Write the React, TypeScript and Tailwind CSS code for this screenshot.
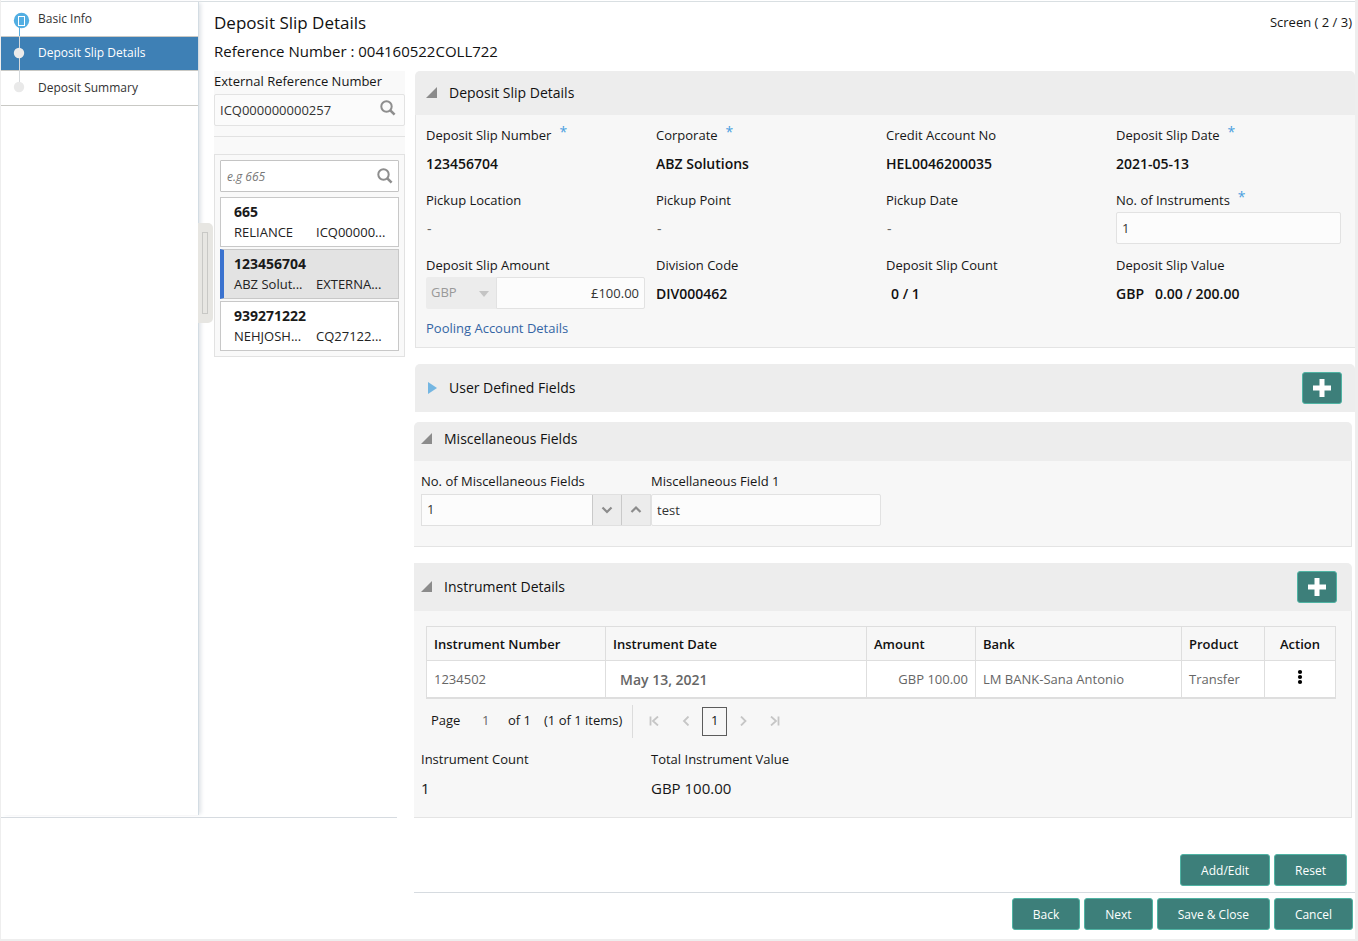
import type { ReactNode } from "react";

const slips = [
  { id: "665", name: "RELIANCE", ref: "ICQ00000..." },
  { id: "123456704", name: "ABZ Solut...", ref: "EXTERNA..." },
  { id: "939271222", name: "NEHJOSH...", ref: "CQ27122..." },
];

const buttonClass =
  "h-8 rounded-[3px] border border-[#4fb3a3] bg-[#3d7f7a] pt-[2px] text-[12px] text-white";

function SearchIcon() {
  return (
    <svg width="16" height="16" viewBox="0 0 16 16" fill="none" aria-hidden="true">
      <circle cx="6.5" cy="6.5" r="5.2" stroke="#8e8e8e" strokeWidth="2" />
      <path d="M10.3 10.3L14.6 14.6" stroke="#8e8e8e" strokeWidth="2.6" />
    </svg>
  );
}

function Chevron({ d }: { d: string }) {
  return (
    <svg width="12" height="12" viewBox="0 0 12 12" fill="none" aria-hidden="true">
      <path d={d} stroke="#8c8c8c" strokeWidth="2.2" />
    </svg>
  );
}

function PageIcon({ d }: { d: string }) {
  return (
    <svg width="10" height="10" viewBox="0 0 10 10" fill="none" aria-hidden="true">
      <path d={d} stroke="#c6c6c6" strokeWidth="1.8" />
    </svg>
  );
}

function AddButton({ label }: { label: string }) {
  return (
    <button
      aria-label={label}
      className="ml-auto flex h-8 w-10 items-center justify-center rounded-[3px] border border-[#4fb3a3] bg-[#3d7f7a]"
    >
      <svg width="18" height="18" viewBox="0 0 18 18" aria-hidden="true">
        <path d="M6.5 0h5v6.5H18v5h-6.5V18h-5v-6.5H0v-5h6.5z" fill="#fff" />
      </svg>
    </button>
  );
}

function PanelTitle({ title, open = true }: { title: string; open?: boolean }) {
  return (
    <button className="flex items-center gap-[11px] text-[14px] leading-5 text-[#111]">
      <svg width="12" height="12" viewBox="0 0 12 12" aria-hidden="true">
        {open ? (
          <path d="M11 0v11H0z" fill="#8b8b8b" />
        ) : (
          <path d="M2 0l9 6-9 6z" fill="#74b6e2" />
        )}
      </svg>
      {title}
    </button>
  );
}

function Label({
  text,
  required,
  htmlFor,
}: {
  text: string;
  required?: boolean;
  htmlFor?: string;
}) {
  const star = required && (
    <span className="mb-2 ml-2 text-[14px] leading-3 text-[#4a9fe0]">*</span>
  );
  const style = "flex h-[22px] items-center text-[13px] text-[#161616]";
  return htmlFor ? (
    <label htmlFor={htmlFor} className={style}>
      {text}
      {star}
    </label>
  ) : (
    <div className={style}>
      {text}
      {star}
    </div>
  );
}

function Field({
  label,
  required,
  children,
}: {
  label: string;
  required?: boolean;
  children: ReactNode;
}) {
  return (
    <div>
      <Label text={label} required={required} />
      <div className="flex h-8 items-center text-[14px] font-semibold text-[#111]">{children}</div>
    </div>
  );
}

function Sidebar() {
  return (
    <aside className="relative w-[198px] shrink-0">
      <nav className="h-[813px] border-r border-[#d3dce3] shadow-[3px_0_4px_-1px_#dfe3e7]">
        <div className="grid h-[104px] grid-rows-3 text-[12px] text-[#333]">
          <a href="#basic" className="flex items-center border-b border-[#c9c9c5] pl-[37px]">
            Basic Info
          </a>
          <a
            href="#details"
            className="flex items-center border-b border-[#c9c9c5] bg-[#3e80b5] pl-[37px] text-white"
          >
            Deposit Slip Details
          </a>
          <a href="#summary" className="flex items-center border-b border-[#c9c9c5] pl-[37px]">
            Deposit Summary
          </a>
        </div>
      </nav>
      <hr className="mt-[2px] w-[396px] border-[#d6dbe0]" />
      <svg
        width="36"
        height="104"
        viewBox="0 0 36 104"
        fill="none"
        className="pointer-events-none absolute top-0 left-0"
        aria-hidden="true"
      >
        <path d="M18.5 20V34" stroke="#5aaee0" />
        <path d="M18.5 34V85" stroke="#d5d9dc" />
        <circle cx="20.5" cy="18.5" r="7.7" fill="#52aee2" />
        <rect x="17.5" y="14.5" width="6" height="9" stroke="#fff" />
        <circle cx="18" cy="51" r="5.2" fill="#ecebea" />
        <circle cx="18" cy="85" r="5.2" fill="#e9e9e9" />
      </svg>
      <div className="absolute top-[221px] left-[197px] flex h-[100px] w-[15px] items-center rounded-r-[5px] bg-[#e7e6e2] pl-1">
        <span className="h-[82px] w-[6px] border border-[#c8c8c5]" />
      </div>
    </aside>
  );
}

function SlipList() {
  return (
    <div className="w-[191px] shrink-0">
      <div className="bg-[#f9f9f9] pb-[17px]">
        <Label text="External Reference Number" htmlFor="ext-ref" />
        <div className="mt-px flex h-8 items-center rounded-[2px] border border-[#e3e3e3] bg-[#fbfbfb] pr-2">
          <input
            id="ext-ref"
            defaultValue="ICQ000000000257"
            className="h-full w-full min-w-0 pl-[5px] text-[13px] text-[#333]"
          />
          <button aria-label="Search reference" className="mb-1">
            <SearchIcon />
          </button>
        </div>
        <hr className="mt-[10px] border-[#e2e2e2]" />
      </div>
      <div className="border border-[#e2e2e2] bg-[#f9f9f9] p-[5px]">
        <div className="flex h-8 items-center rounded-[1px] border border-[#c4c4c4] bg-white pr-[5px]">
          <input
            aria-label="Search deposit slips"
            placeholder="e.g 665"
            className="h-full w-full min-w-0 pl-[6px] text-[12px] italic placeholder:text-[#777]"
          />
          <button aria-label="Search">
            <SearchIcon />
          </button>
        </div>
        <ul className="mt-[5px] grid gap-[2px]">
          {slips.map((slip) => (
            <li
              key={slip.id}
              className={
                slip.id === "123456704"
                  ? "h-[50px] border border-l-4 border-[#c8c8c8] border-l-[#3a72cf] bg-[#e3e3e3] pt-1 pl-[10px]"
                  : "h-[50px] border border-[#c8c8c8] bg-white pt-1 pl-[13px]"
              }
            >
              <div className="text-[14px] leading-5 font-bold text-[#1a1a1a]">{slip.id}</div>
              <div className="flex text-[13px] leading-5 text-[#222]">
                <span className="w-[82px] whitespace-nowrap">{slip.name}</span>
                <span className="whitespace-nowrap">{slip.ref}</span>
              </div>
            </li>
          ))}
        </ul>
      </div>
    </div>
  );
}

function DepositSlipPanel() {
  return (
    <section>
      <header className="flex h-11 items-center rounded-t-[5px] bg-[#ededed] pl-[11px]">
        <PanelTitle title="Deposit Slip Details" />
      </header>
      <div className="border-b border-l border-[#e4e4e4] bg-[#f7f7f7] pt-[10px] pr-[9px] pb-[9px] pl-[10px]">
        <div className="grid grid-cols-4 gap-y-[11px]">
          <Field label="Deposit Slip Number" required>
            123456704
          </Field>
          <Field label="Corporate" required>
            ABZ Solutions
          </Field>
          <Field label="Credit Account No">HEL0046200035</Field>
          <Field label="Deposit Slip Date" required>
            2021-05-13
          </Field>
          <Field label="Pickup Location">
            <span className="pl-px font-normal text-[#666]">-</span>
          </Field>
          <Field label="Pickup Point">
            <span className="pl-px font-normal text-[#666]">-</span>
          </Field>
          <Field label="Pickup Date">
            <span className="pl-px font-normal text-[#666]">-</span>
          </Field>
          <div className="pr-[5px]">
            <Label text="No. of Instruments" required htmlFor="instruments" />
            <input
              id="instruments"
              defaultValue="1"
              className="h-8 w-full rounded-[2px] border border-[#e2e2e2] bg-[#fcfcfc] pl-[5px] text-[13px] text-[#333]"
            />
          </div>
          <div className="pr-[11px]">
            <Label text="Deposit Slip Amount" htmlFor="amount" />
            <div className="flex h-8">
              <div className="relative w-[70px] shrink-0">
                <select
                  aria-label="Currency"
                  disabled
                  className="h-full w-full appearance-none rounded-l-[2px] bg-[#ececec] pl-[5px] text-[13px] text-[#999] opacity-100"
                >
                  <option>GBP</option>
                </select>
                <svg
                  width="10"
                  height="6"
                  viewBox="0 0 10 6"
                  className="pointer-events-none absolute top-[14px] right-[7px]"
                  aria-hidden="true"
                >
                  <path d="M0 0h10L5 6z" fill="#c4c4c4" />
                </svg>
              </div>
              <input
                id="amount"
                defaultValue="£100.00"
                className="h-full w-full min-w-0 rounded-r-[2px] border border-[#e2e2e2] bg-[#fcfcfc] pr-[5px] text-right text-[13px] text-[#333]"
              />
            </div>
          </div>
          <Field label="Division Code">DIV000462</Field>
          <Field label="Deposit Slip Count">
            <span className="pl-[5px]">0 / 1</span>
          </Field>
          <Field label="Deposit Slip Value">
            <span className="mr-[11px]">GBP</span>
            <span>0.00 / 200.00</span>
          </Field>
        </div>
        <a href="#pooling" className="mt-[9px] block w-fit text-[13px] leading-5 text-[#3465a4]">
          Pooling Account Details
        </a>
      </div>
    </section>
  );
}

function MiscPanel() {
  return (
    <section className="mt-[10px] mr-[3px] -ml-px">
      <header className="flex h-[39px] items-center rounded-t-[5px] bg-[#ededed] pb-[6px] pl-[7px]">
        <PanelTitle title="Miscellaneous Fields" />
      </header>
      <div className="flex border-r border-b border-[#e4e4e4] bg-[#f7f7f7] pt-[10px] pb-5 pl-[7px]">
        <div className="w-[230px]">
          <Label text="No. of Miscellaneous Fields" htmlFor="misc-count" />
          <div className="mt-px flex h-8 border border-[#e0e0e0]">
            <input
              id="misc-count"
              defaultValue="1"
              className="w-full min-w-0 bg-[#fcfcfc] pl-[5px] text-[13px] text-[#333]"
            />
            <button
              aria-label="Decrease"
              className="flex w-[29px] shrink-0 items-center justify-center border-l border-[#c9c9c9] bg-[#ececec]"
            >
              <Chevron d="M1.5 3.5L6 8l4.500-4.500" />
            </button>
            <button
              aria-label="Increase"
              className="flex w-[29px] shrink-0 items-center justify-center border-l border-[#c9c9c9] bg-[#ececec]"
            >
              <Chevron d="M1.5 8L6 3.500 10.500 8" />
            </button>
          </div>
        </div>
        <div className="w-[230px]">
          <Label text="Miscellaneous Field 1" htmlFor="misc-1" />
          <input
            id="misc-1"
            defaultValue="test"
            className="mt-px h-8 w-full rounded-[2px] border border-[#e2e2e2] bg-[#fcfcfc] pl-[5px] text-[13px] text-[#333]"
          />
        </div>
      </div>
    </section>
  );
}

function InstrumentPanel() {
  const cell = "border border-[#dedede] px-[7px] pt-[2px]";
  return (
    <section className="mt-4 mr-[3px] -ml-px">
      <header className="flex h-12 items-center rounded-tr-[5px] bg-[#ededed] pr-[15px] pl-[7px]">
        <PanelTitle title="Instrument Details" />
        <AddButton label="Add instrument" />
      </header>
      <div className="border-r border-b border-[#e4e4e4] bg-[#f7f7f7] pt-[15px] pb-[19px] pl-[7px]">
        <div className="mr-[15px] ml-[5px]">
          <table className="w-full table-fixed border-collapse border-b-2 border-[#dedede] text-left text-[13px]">
            <thead>
              <tr className="h-[34px] text-[#111]">
                <th className={cell + " w-[179px] font-semibold"}>Instrument Number</th>
                <th className={cell + " w-[261px] font-semibold"}>Instrument Date</th>
                <th className={cell + " w-[109px] font-semibold"}>Amount</th>
                <th className={cell + " font-semibold"}>Bank</th>
                <th className={cell + " w-[83px] font-semibold"}>Product</th>
                <th className={cell + " w-[71px] text-center font-semibold"}>Action</th>
              </tr>
            </thead>
            <tbody>
              <tr className="h-[37px] bg-white text-[#666]">
                <td className={cell}>1234502</td>
                <td className={cell + " text-[14px] font-semibold"}>
                  <span className="pl-[7px]">May 13, 2021</span>
                </td>
                <td className={cell + " text-right"}>GBP 100.00</td>
                <td className={cell}>LM BANK-Sana Antonio</td>
                <td className={cell}>Transfer</td>
                <td className={cell}>
                  <button aria-label="Row actions" className="mx-auto mb-[6px] block text-black">
                    <svg width="6" height="16" viewBox="0 0 6 16" aria-hidden="true">
                      <circle cx="3" cy="3" r="2.100" />
                      <circle cx="3" cy="8" r="2.100" />
                      <circle cx="3" cy="13" r="2.100" />
                    </svg>
                  </button>
                </td>
              </tr>
            </tbody>
          </table>
        </div>
        <div className="mt-[6px] ml-[10px] flex h-[33px] items-center text-[13px] text-[#161616]">
          <label htmlFor="page" className="w-[51px]">
            Page
          </label>
          <input id="page" defaultValue="1" className="w-[26px] text-[#666]" />
          <span className="w-9">of 1</span>
          <span>(1 of 1 items)</span>
          <span className="ml-[10px] h-full border-l border-[#dcdcdc]" />
          <div className="ml-4 flex items-center">
            <button aria-label="First page" disabled>
              <PageIcon d="M1.500 0.500v9M9 0.500L4 5l5 4.500" />
            </button>
            <button aria-label="Previous page" disabled className="ml-[22px]">
              <PageIcon d="M7.500 0.500L3 5l4.500 4.500" />
            </button>
            <button className="mx-[11px] h-[29px] w-[25px] border border-[#5c5c5c]">1</button>
            <button aria-label="Next page" disabled>
              <PageIcon d="M3 0.500L7.500 5 3 9.500" />
            </button>
            <button aria-label="Last page" disabled className="ml-[22px]">
              <PageIcon d="M8.500 0.500v9M1 0.500L6 5l-5 4.500" />
            </button>
          </div>
        </div>
        <div className="mt-[11px] flex text-[#161616]">
          <div className="w-[230px]">
            <Label text="Instrument Count" />
            <div className="mt-[7px] text-[15px] leading-5">1</div>
          </div>
          <div className="w-[230px]">
            <Label text="Total Instrument Value" />
            <div className="mt-[7px] text-[15px] leading-5">GBP 100.00</div>
          </div>
        </div>
      </div>
    </section>
  );
}

export default function App() {
  return (
    <div className="min-h-screen border-r-[3px] border-b-2 border-l border-[#eeeeee] bg-white pt-px font-['Open_Sans','Noto_Sans',sans-serif]">
      <div className="flex border-t border-[#d9dfe2]">
        <Sidebar />
        <main className="min-w-0 flex-1 pl-[15px]">
          <div className="mt-[9px] flex items-center justify-between pr-[3px]">
            <h1 className="text-[17px] leading-6 text-[#111]">Deposit Slip Details</h1>
            <span className="text-[13px] text-[#161616]">Screen ( 2 / 3)</span>
          </div>
          <p className="mt-[6px] text-[15px] leading-5 text-[#111]">
            Reference Number : 004160522COLL722
          </p>
          <div className="mt-[10px] flex gap-[10px]">
            <SlipList />
            <div className="min-w-0 flex-1">
              <DepositSlipPanel />
              <section className="mt-4 flex h-12 items-center rounded-t-[5px] bg-[#ededed] pr-[13px] pl-[11px]">
                <PanelTitle title="User Defined Fields" open={false} />
                <AddButton label="Add user defined field" />
              </section>
              <MiscPanel />
              <InstrumentPanel />
              <div className="mt-9 mr-2 flex justify-end gap-1">
                <button className={buttonClass + " px-5"}>Add/Edit</button>
                <button className={buttonClass + " px-5"}>Reset</button>
              </div>
              <hr className="mt-[6px] -ml-px border-[#d6dbe0]" />
              <div className="mt-[5px] mr-[2px] flex justify-end gap-1 pb-2">
                <button className={buttonClass + " px-5"}>Back</button>
                <button className={buttonClass + " px-5"}>Next</button>
                <button className={buttonClass + " px-5"}>Save &amp; Close</button>
                <button className={buttonClass + " px-5"}>Cancel</button>
              </div>
            </div>
          </div>
        </main>
      </div>
    </div>
  );
}
